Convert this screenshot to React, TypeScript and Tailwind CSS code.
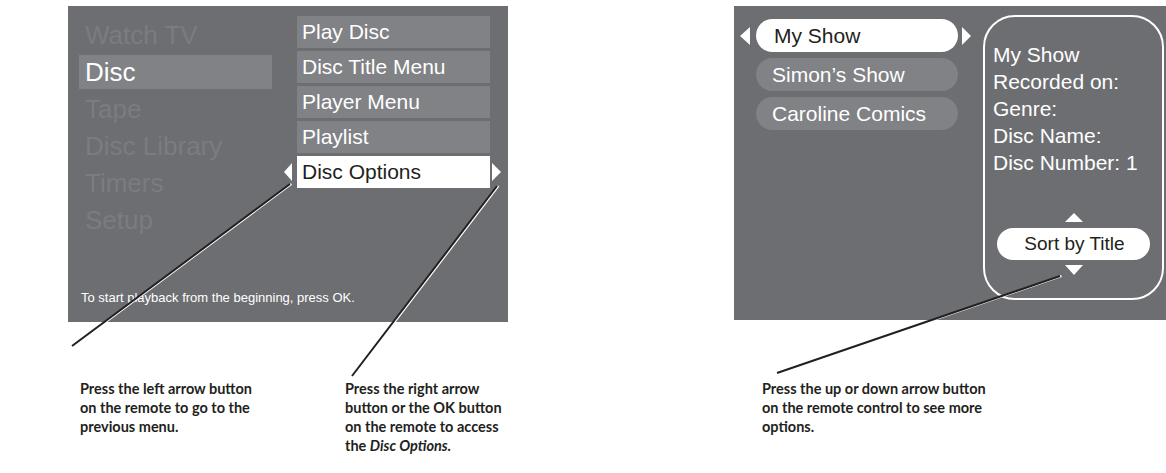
type Dir = "left" | "right" | "up" | "down";

const Tri = ({ dir, className }: { dir: Dir; className?: string }) => {
  const points = {
    left: "8,0 8,18 0,9",
    right: "0,0 0,18 8,9",
    up: "0,9 18,9 9,0",
    down: "0,0 18,0 9,9",
  }[dir];
  const box = dir === "left" || dir === "right" ? "0 0 8 18" : "0 0 18 9";
  return (
    <svg viewBox={box} className={className} preserveAspectRatio="none">
      <polygon points={points} fill="#ffffff" />
    </svg>
  );
};

const mainMenu = ["Watch TV", "Disc", "Tape", "Disc Library", "Timers", "Setup"];
const subMenu = ["Play Disc", "Disc Title Menu", "Player Menu", "Playlist", "Disc Options"];
const shows = ["My Show", "Simon’s Show", "Caroline Comics"];
const details = ["My Show", "Recorded on:", "Genre:", "Disc Name:", "Disc Number: 1"];

const Callout = ({ x1, y1, x2, y2 }: { x1: number; y1: number; x2: number; y2: number }) => (
  <g>
    <line x1={x1 + 1.5} y1={y1} x2={x2 + 1.5} y2={y2} stroke="#ffffff" strokeWidth="2" />
    <line x1={x1} y1={y1} x2={x2} y2={y2} stroke="#231f20" strokeWidth="2" />
  </g>
);

const App = () => {
  return (
    <div className="relative h-[473px] w-[1166px] overflow-hidden bg-white">
      <div className="flex pt-[6px] font-[family-name:Liberation_Sans,Arial,sans-serif]">
        {/* disc menu screen */}
        <div className="ml-[68px] flex h-[316px] w-[440px] flex-col bg-[#6d6e71]">
          <div className="flex items-start pl-[11px] pt-[10px]">
            <div className="mt-[2px] flex w-[193px] flex-col gap-[3px]">
              {mainMenu.map((item) => (
                <div
                  key={item}
                  className={
                    item === "Disc"
                      ? "h-[34px] bg-[#808285] pl-[6px] text-[26px] leading-[34px] text-white"
                      : "h-[34px] pl-[6px] text-[26px] leading-[34px] text-[#7b7c7f]"
                  }
                >
                  {item}
                </div>
              ))}
            </div>
            <div className="ml-[25px] flex w-[193px] flex-col gap-[3px]">
              {subMenu.map((item) =>
                item === "Disc Options" ? (
                  <div key={item} className="relative h-[32px] bg-white pl-[5px] text-[21px] leading-[32px] text-[#231f20]">
                    <Tri dir="left" className="absolute left-[-13px] top-[7px] h-[18px] w-[8px]" />
                    {item}
                    <Tri dir="right" className="absolute right-[-11px] top-[7px] h-[18px] w-[9px]" />
                  </div>
                ) : (
                  <div key={item} className="h-[32px] bg-[#808285] pl-[5px] text-[21px] leading-[32px] text-white">
                    {item}
                  </div>
                )
              )}
            </div>
          </div>
          <p className="mt-auto pb-[16px] pl-[13px] text-[13px] leading-[16px] text-white">
            To start playback from the beginning, press OK.
          </p>
        </div>

        {/* recordings screen */}
        <div className="ml-[226px] flex h-[314px] w-[432px] items-start bg-[#6d6e71] pl-[6px] pt-[9px]">
          <div className="mt-[4px] flex flex-col gap-[6px]">
            {shows.map((show, i) => (
              <div key={show} className="flex items-center">
                <Tri dir="left" className={i === 0 ? "h-[18px] w-[10px]" : "invisible h-[18px] w-[10px]"} />
                <div
                  className={
                    i === 0
                      ? "ml-[6px] h-[33px] w-[202px] rounded-full bg-white pl-[18px] text-[21px] leading-[33px] text-[#231f20]"
                      : "ml-[6px] h-[33px] w-[202px] rounded-full bg-[#808285] pl-[16px] text-[21px] leading-[33px] text-white"
                  }
                >
                  {show}
                </div>
                <Tri dir="right" className={i === 0 ? "ml-[4px] h-[18px] w-[9px]" : "invisible ml-[4px] h-[18px] w-[9px]"} />
              </div>
            ))}
          </div>
          <div className="ml-[12px] flex h-[285px] w-[181px] flex-col rounded-[32px] border-2 border-white">
            <div className="pl-[8px] pt-[24px] text-[21px] leading-[27px] text-white">
              {details.map((d) => (
                <div key={d}>{d}</div>
              ))}
            </div>
            <div className="mt-auto flex flex-col items-center pb-[23px]">
              <Tri dir="up" className="h-[9px] w-[18px]" />
              <div className="mt-[6px] h-[32px] w-[153px] rounded-full bg-white pl-[2px] text-center text-[19px] leading-[32px] text-[#231f20]">
                Sort by Title
              </div>
              <Tri dir="down" className="mt-[5px] h-[10px] w-[18px]" />
            </div>
          </div>
        </div>
      </div>

      {/* captions */}
      <div className="mt-[57px] flex font-[family-name:Lato,sans-serif] text-[14.5px] font-bold leading-[19px] text-[#231f20]">
        <p className="ml-[80px] w-[265px]">
          Press the left arrow button
          <br />
          on the remote to go to the
          <br />
          previous menu.
        </p>
        <p className="w-[417px]">
          Press the right arrow
          <br />
          button or the OK button
          <br />
          on the remote to access
          <br />
          the <em>Disc Options.</em>
        </p>
        <p>
          Press the up or down arrow button
          <br />
          on the remote control to see more
          <br />
          options.
        </p>
      </div>

      {/* pointer lines */}
      <svg className="pointer-events-none absolute inset-0" width="1166" height="473">
        <Callout x1={290} y1={184} x2={72} y2={346} />
        <Callout x1={497} y1={186} x2={352} y2={376} />
        <Callout x1={1060} y1={276} x2={777} y2={373} />
      </svg>
    </div>
  );
};

export default App;
